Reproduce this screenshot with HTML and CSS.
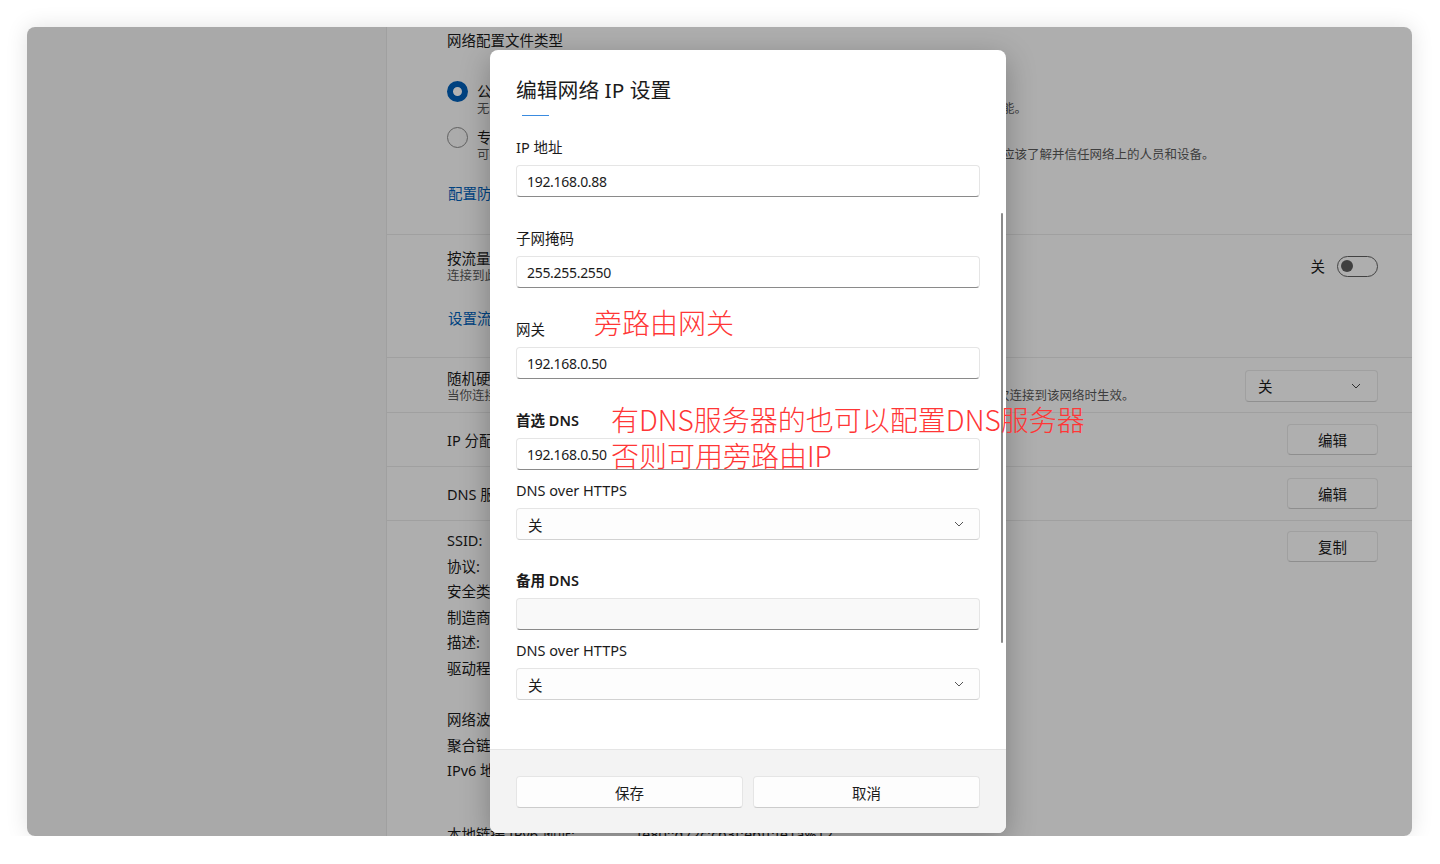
FILE: index.html
```html
<!DOCTYPE html>
<html lang="zh-CN">
<head>
    <meta charset="UTF-8">
    <title>编辑网络 IP 设置</title>
    <link rel="stylesheet" href="styles.css">
</head>
<body>

    <div class="window">
        <aside class="nav"></aside>

        <main class="content">
            <section class="profile">
                <div class="heading">网络配置文件类型</div>

                <div class="option first">
                    <span class="radio on"></span>
                    <div>
                        <div class="label">公用网络(推荐)</div>
                        <div class="sub">无法在网络上发现你的设备。在大多数情况下请使用此设置，这样会关闭打印机和文件的共享功能。</div>
                    </div>
                </div>
                <div class="option">
                    <span class="radio"></span>
                    <div>
                        <div class="label">专用网络</div>
                        <div class="sub">可在网络上发现你的设备。如果需要文件共享或使用通过此网络来通信的应用，请选择此项。你应该了解并信任网络上的人员和设备。</div>
                    </div>
                </div>
                <a class="link profile-link">配置防火墙和安全设置</a>
            </section>

            <section class="row metered">
                <div class="row-top">
                    <div>
                        <div class="label">按流量计费的连接</div>
                        <div class="sub">连接到此网络时，某些应用的工作方式可能会有所不同，以帮助减少数据使用量</div>
                    </div>
                    <div class="toggle-wrap">
                        <span>关</span>
                        <span class="toggle"><span class="knob"></span></span>
                    </div>
                </div>
                <a class="link metered-link">设置流量上限以帮助控制此网络上的数据使用量</a>
            </section>

            <section class="row random">
                <div>
                    <div class="label">随机硬件地址</div>
                    <div class="sub">当你连接到此网络时，通过使用随机硬件地址让其他人更难跟踪你的设备位置。此设置将在你下次再次连接到该网络时生效。</div>
                </div>
                <div class="combo">
                    <span>关</span>
                    <svg width="10" height="6" viewBox="0 0 10 6"><path d="M1 1 L5 5 L9 1" fill="none" stroke="#444" stroke-width="1"/></svg>
                </div>
            </section>

            <section class="row simple">
                <div class="label">IP 分配:</div>
                <button class="btn">编辑</button>
            </section>

            <section class="row simple">
                <div class="label">DNS 服务器分配:</div>
                <button class="btn">编辑</button>
            </section>

            <section class="row details">
                <div class="props">
                    <div class="group">
                        <span>SSID:</span><span>TP-LINK_5G_2A3F</span>
                        <span>协议:</span><span>Wi-Fi 5 (802.11ac)</span>
                        <span>安全类型:</span><span>WPA2-个人</span>
                        <span>制造商:</span><span>Intel Corporation</span>
                        <span>描述:</span><span>Intel(R) Wi-Fi 6 AX201 160MHz</span>
                        <span>驱动程序版本:</span><span>22.150.0.3</span>
                    </div>
                    <div class="group">
                        <span>网络波段:</span><span>5 GHz</span>
                        <span>聚合链路速度(接收/传输):</span><span>866/866 (Mbps)</span>
                        <span>IPv6 地址:</span><span>240e:3b4:c05:1a20::1005</span>
                    </div>
                    <div class="group last">
                        <span>本地链接 IPv6 地址:</span><span>fe80::d72c:cb3f:ebff:fe1a%12</span>
                    </div>
                </div>
                <button class="btn copy">复制</button>
            </section>
        </main>

        <div class="scrim"></div>

        <div class="dialog">
            <div class="dialog-body">
                <div class="dialog-title">编辑网络 IP 设置</div>
                <div class="tab-line"></div>

                <div class="field first">
                    <div class="field-label">IP 地址</div>
                    <input class="input" type="text" value="192.168.0.88">
                </div>
                <div class="field">
                    <div class="field-label">子网掩码</div>
                    <input class="input" type="text" value="255.255.2550">
                </div>
                <div class="field">
                    <div class="field-label">网关</div>
                    <input class="input" type="text" value="192.168.0.50">
                </div>
                <div class="field">
                    <div class="field-label strong">首选 DNS</div>
                    <input class="input" type="text" value="192.168.0.50">
                    <div class="field-label doh">DNS over HTTPS</div>
                    <div class="select">
                        <span>关</span>
                        <svg width="10" height="6" viewBox="0 0 10 6"><path d="M1 1 L5 5 L9 1" fill="none" stroke="#555" stroke-width="1"/></svg>
                    </div>
                </div>
                <div class="field alt">
                    <div class="field-label strong">备用 DNS</div>
                    <input class="input empty" type="text" value="">
                    <div class="field-label doh">DNS over HTTPS</div>
                    <div class="select">
                        <span>关</span>
                        <svg width="10" height="6" viewBox="0 0 10 6"><path d="M1 1 L5 5 L9 1" fill="none" stroke="#555" stroke-width="1"/></svg>
                    </div>
                </div>
            </div>
            <div class="scrollbar"></div>
            <div class="dialog-footer">
                <button class="btn wide">保存</button>
                <button class="btn wide">取消</button>
            </div>
        </div>
    </div>

    <!-- 标注 -->
    <div class="note note-gateway">旁路由网关</div>
    <div class="note note-dns">有DNS服务器的也可以配置DNS服务器<br>否则可用旁路由IP</div>

</body>
</html>
```

FILE: styles.css
```css
body {
    margin: 0;
    background-color: #fff;
    font-family: "Noto Sans", "Noto Sans CJK SC", sans-serif;
    font-size: 14.5px;
    color: #1b1b1b;
}
.window {
    position: relative;
    display: flex;
    width: 1385px;
    height: 809px;
    margin: 27px 0 0 27px;
    border-radius: 8px;
    overflow: hidden;
    box-shadow: 0 0 22px rgba(0, 0, 0, 0.12);
}
.nav {
    flex: none;
    width: 359px;
    background-color: #f3f3f3;
    border-right: 1px solid #e6e6e6;
}
.content {
    flex: 1;
    background-color: #fafafa;
    line-height: 20px;
}
.label {
    line-height: 20px;
    white-space: nowrap;
}
.sub {
    font-size: 12.5px;
    line-height: 16px;
    color: #5a5a5a;
    white-space: nowrap;
}
.link {
    display: block;
    color: #005fb8;
    padding-left: 1px;
}

/* 网络配置文件类型 */
.profile {
    padding: 3px 34px 31px 60px;
}
.option {
    display: flex;
    align-items: flex-start;
    gap: 9px;
    margin-top: 10px;
}
.option.first {
    margin-top: 31px;
}
.radio {
    flex: none;
    width: 21px;
    height: 21px;
    box-sizing: border-box;
    border-radius: 50%;
    border: 1px solid #8a8a8a;
    background-color: #f5f5f5;
}
.radio.on {
    border: 6px solid #005fb8;
    background-color: #fff;
}
.profile-link {
    margin-top: 20px;
}

/* 行 */
.row {
    border-top: 1px solid #e6e6e6;
    padding: 0 34px 0 60px;
}
.metered {
    padding-top: 13px;
    padding-bottom: 29px;
}
.row-top {
    display: flex;
    align-items: center;
    justify-content: space-between;
}
.metered-link {
    margin-top: 24px;
}
.toggle-wrap {
    display: flex;
    align-items: center;
    gap: 12px;
}
.toggle {
    display: flex;
    align-items: center;
    width: 41px;
    height: 21px;
    box-sizing: border-box;
    padding: 0 3px;
    border: 1px solid #5f5f5f;
    border-radius: 11px;
}
.knob {
    width: 12px;
    height: 12px;
    border-radius: 50%;
    background-color: #5c5c5c;
}
.random {
    display: flex;
    align-items: center;
    justify-content: space-between;
    padding-top: 10px;
    padding-bottom: 8px;
}
.combo {
    display: flex;
    align-items: center;
    justify-content: space-between;
    width: 133px;
    height: 32px;
    box-sizing: border-box;
    padding: 0 16px 0 12px;
    background-color: #fbfbfb;
    border: 1px solid #e5e5e5;
    border-bottom-color: #cfcfcf;
    border-radius: 4px;
}
.simple {
    display: flex;
    align-items: center;
    justify-content: space-between;
    padding-top: 11px;
    padding-bottom: 11px;
}
.btn {
    width: 91px;
    height: 31px;
    box-sizing: border-box;
    font-family: inherit;
    font-size: 14.5px;
    color: #1b1b1b;
    background-color: #fbfbfb;
    border: 1px solid #e5e5e5;
    border-bottom-color: #cccccc;
    border-radius: 4px;
    padding: 0;
}

/* 属性 */
.details {
    display: flex;
    align-items: flex-start;
    justify-content: space-between;
    padding-top: 7px;
}
.group {
    display: grid;
    grid-template-columns: 190px auto;
    line-height: 25.6px;
    white-space: nowrap;
}
.group + .group {
    margin-top: 25.6px;
}
.group.last {
    margin-top: 38px;
}
.copy {
    margin-top: 3px;
}

.scrim {
    position: absolute;
    inset: 0;
    background-color: rgba(0, 0, 0, 0.3);
}

/* 对话框 */
.dialog {
    position: absolute;
    left: 463px;
    top: 23px;
    width: 516px;
    height: 783px;
    display: flex;
    flex-direction: column;
    background-color: #fff;
    border-radius: 8px;
    overflow: hidden;
    box-shadow: 0 8px 30px rgba(0, 0, 0, 0.28);
}
.dialog-body {
    flex: 1;
    padding: 26px 26px 0;
}
.dialog-title {
    font-size: 20.8px;
    line-height: 28px;
}
.tab-line {
    width: 27px;
    height: 1px;
    margin: 11px 0 0 6px;
    background-color: #3a8be0;
}
.field {
    margin-top: 31px;
}
.field.first {
    margin-top: 21px;
}
.field.alt {
    margin-top: 30px;
}
.field-label {
    line-height: 20px;
    margin-bottom: 8px;
}
.field-label.strong {
    font-weight: 600;
}
.field-label.doh {
    margin-top: 10px;
}
.input {
    display: block;
    width: 100%;
    height: 32px;
    box-sizing: border-box;
    padding: 0 10px;
    font-family: inherit;
    font-size: 14px;
    letter-spacing: -0.3px;
    color: #1b1b1b;
    background-color: #fff;
    border: 1px solid #e5e5e5;
    border-bottom-color: #8a8a8a;
    border-radius: 4px;
    outline: none;
}
.input.empty {
    background-color: #f9f9f9;
}
.select {
    display: flex;
    align-items: center;
    justify-content: space-between;
    height: 32px;
    box-sizing: border-box;
    padding: 0 15px 0 11px;
    background-color: #fdfdfd;
    border: 1px solid #e5e5e5;
    border-bottom-color: #d2d2d2;
    border-radius: 4px;
}
.scrollbar {
    position: absolute;
    right: 3px;
    top: 163px;
    width: 2px;
    height: 430px;
    border-radius: 1px;
    background-color: #8a8a8a;
}
.dialog-footer {
    flex: none;
    display: grid;
    grid-template-columns: 1fr 1fr;
    gap: 10px;
    height: 84px;
    box-sizing: border-box;
    padding: 26px 26px 0;
    background-color: #f3f3f3;
    border-top: 1px solid #e5e5e5;
}
.btn.wide {
    width: auto;
    height: 32px;
    background-color: #fdfdfd;
}

/* 红色标注 */
.note {
    position: absolute;
    color: #ff3636;
    font-family: "Noto Sans CJK SC", sans-serif;
    font-weight: 300;
    font-size: 28px;
    white-space: nowrap;
}
.note-gateway {
    left: 594px;
    top: 305px;
    line-height: 34px;
}
.note-dns {
    left: 611px;
    top: 401px;
    line-height: 36px;
}
```
